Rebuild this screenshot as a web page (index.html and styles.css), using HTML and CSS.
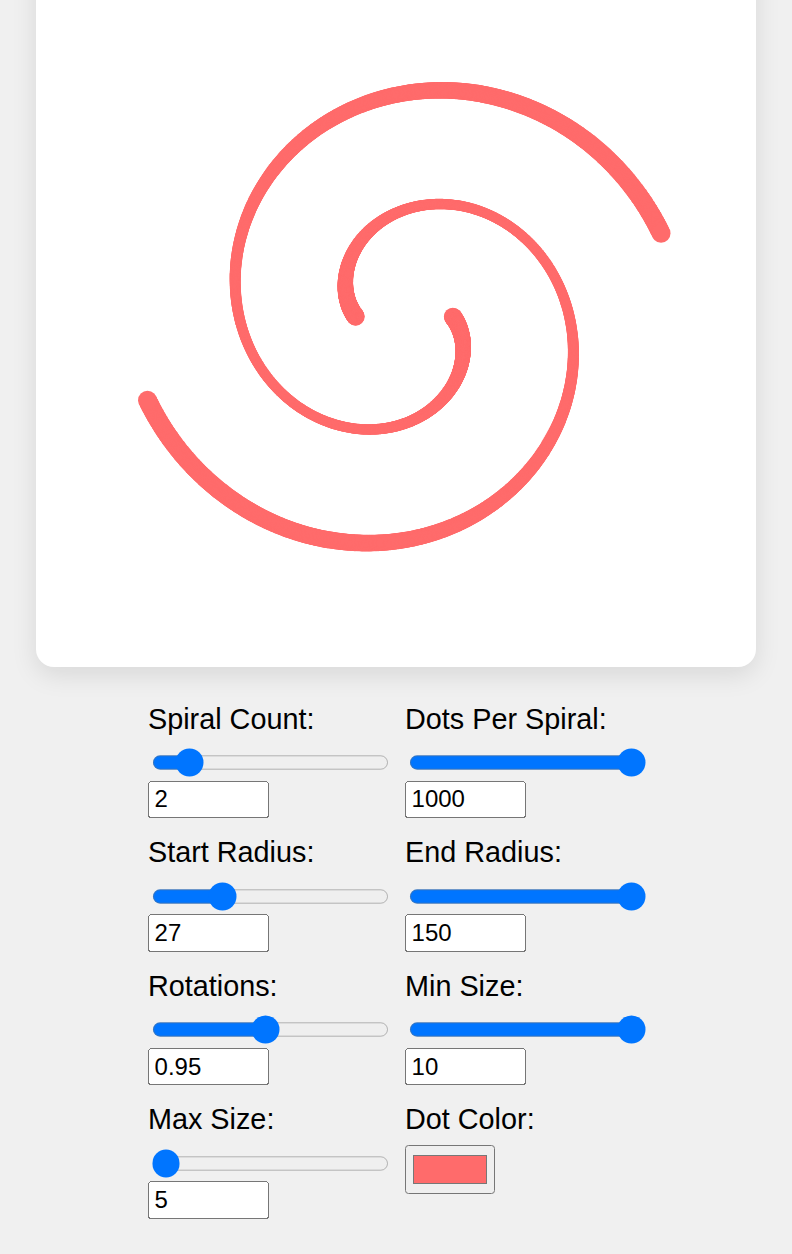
FILE: index.html
```html
<!DOCTYPE html>
<html lang="en">
<head>
<meta charset="utf-8">
<title>Spiral Dots</title>
<link rel="stylesheet" href="styles.css">
</head>
<body>
<div class="app">
  <div class="card">
    <canvas id="spiral" class="spiral-canvas" width="720" height="720"></canvas>
  </div>
  <div class="controls">
    <div class="control-group">
      <label class="control-label" for="spiralCount">Spiral Count:</label>
      <input type="range" class="slider" id="spiralCount" min="1" max="10" value="2">
      <input type="number" class="num" value="2">
    </div>
    <div class="control-group">
      <label class="control-label" for="dots">Dots Per Spiral:</label>
      <input type="range" class="slider" id="dots" min="10" max="1000" value="1000">
      <input type="number" class="num" value="1000">
    </div>
    <div class="control-group">
      <label class="control-label" for="startRadius">Start Radius:</label>
      <input type="range" class="slider" id="startRadius" min="0" max="100" value="27">
      <input type="number" class="num" value="27">
    </div>
    <div class="control-group">
      <label class="control-label" for="endRadius">End Radius:</label>
      <input type="range" class="slider" id="endRadius" min="10" max="150" value="150">
      <input type="number" class="num" value="150">
    </div>
    <div class="control-group">
      <label class="control-label" for="rotations">Rotations:</label>
      <input type="range" class="slider" id="rotations" min="0" max="2" step="0.05" value="0.95">
      <input type="number" class="num" value="0.95" step="0.05">
    </div>
    <div class="control-group">
      <label class="control-label" for="minSize">Min Size:</label>
      <input type="range" class="slider" id="minSize" min="1" max="10" value="10">
      <input type="number" class="num" value="10">
    </div>
    <div class="control-group">
      <label class="control-label" for="maxSize">Max Size:</label>
      <input type="range" class="slider" id="maxSize" min="5" max="30" value="5">
      <input type="number" class="num" value="5">
    </div>
    <div class="control-group">
      <label class="control-label" for="dotColor">Dot Color:</label>
      <input type="color" class="color" id="dotColor" value="#ff6b6b">
    </div>
  </div>
</div>
<script src="script.js"></script>
</body>
</html>
```

FILE: styles.css
```css
html, body {
  margin: 0;
  padding: 0;
}
body {
  height: 100vh;
  overflow: hidden;
  background: #f0f0f0;
  display: flex;
  flex-direction: column;
  justify-content: center;
  font-family: "Liberation Sans", Arial, sans-serif;
  color: #000;
}
.app {
  zoom: 1.8;
  flex-shrink: 0;
}
.card {
  margin: 0 20px;
  height: 400px;
  background: #fff;
  border-radius: 10px;
  box-shadow: 0 4px 14px rgba(0, 0, 0, 0.1);
  overflow: hidden;
}
.spiral-canvas {
  display: block;
  width: 400px;
  height: 400px;
}
.controls {
  display: grid;
  grid-template-columns: 132px 132px;
  column-gap: 10.8px;
  row-gap: 10px;
  justify-content: center;
  margin-top: 20px;
  padding-right: 0.8px;
  padding-bottom: 49.2px;
}
.control-group {
  display: flex;
  flex-direction: column;
  align-items: flex-start;
}
.control-label {
  display: block;
  font-size: 16px;
  margin-bottom: 5px;
}
.slider {
  width: 132px;
  margin: 2px;
}
.num {
  width: 60px;
  margin: 0;
  font-family: "Liberation Sans", Arial, sans-serif;
  font-size: 13.333px;
}
.color {
  margin: 0;
}
```

FILE: script.js
```js
(function () {
  var c = document.getElementById('spiral');
  var ctx = c.getContext('2d');
  var s = c.width / 400;
  ctx.scale(s, s);
  ctx.fillStyle = '#ff6b6b';
  var cx = 204.6, cy = 205.4;
  var spirals = 2, dots = 1000, r0 = 27, r1 = 150, rot = 0.95;
  var tbl = [[0, 10], [0.263, 6.1], [0.526, 5.9], [0.8, 9.1], [1, 10.5]];
  function size(t) {
    var i = 0;
    while (i < tbl.length - 2 && t > tbl[i + 1][0]) i++;
    var p0 = tbl[Math.max(i - 1, 0)], p1 = tbl[i], p2 = tbl[i + 1], p3 = tbl[Math.min(i + 2, tbl.length - 1)];
    var h = p2[0] - p1[0];
    var u = (t - p1[0]) / h;
    var m1 = (p2[1] - p0[1]) / (p2[0] - p0[0] || 1) * h;
    var m2 = (p3[1] - p1[1]) / (p3[0] - p1[0] || 1) * h;
    var u2 = u * u, u3 = u2 * u;
    return (2 * u3 - 3 * u2 + 1) * p1[1] + (u3 - 2 * u2 + u) * m1 + (-2 * u3 + 3 * u2) * p2[1] + (u3 - u2) * m2;
  }
  for (var k = 0; k < spirals; k++) {
    var off = k * 2 * Math.PI / spirals;
    for (var i = 0; i < dots; i++) {
      var t = i / (dots - 1);
      var a = off + t * rot * 2 * Math.PI;
      var r = r0 + t * (r1 - r0);
      var x = cx + r * Math.cos(a), y = cy + r * Math.sin(a);
      ctx.beginPath();
      ctx.arc(x, y, size(t) / 2, 0, 2 * Math.PI);
      ctx.fill();
    }
  }
})();
```
